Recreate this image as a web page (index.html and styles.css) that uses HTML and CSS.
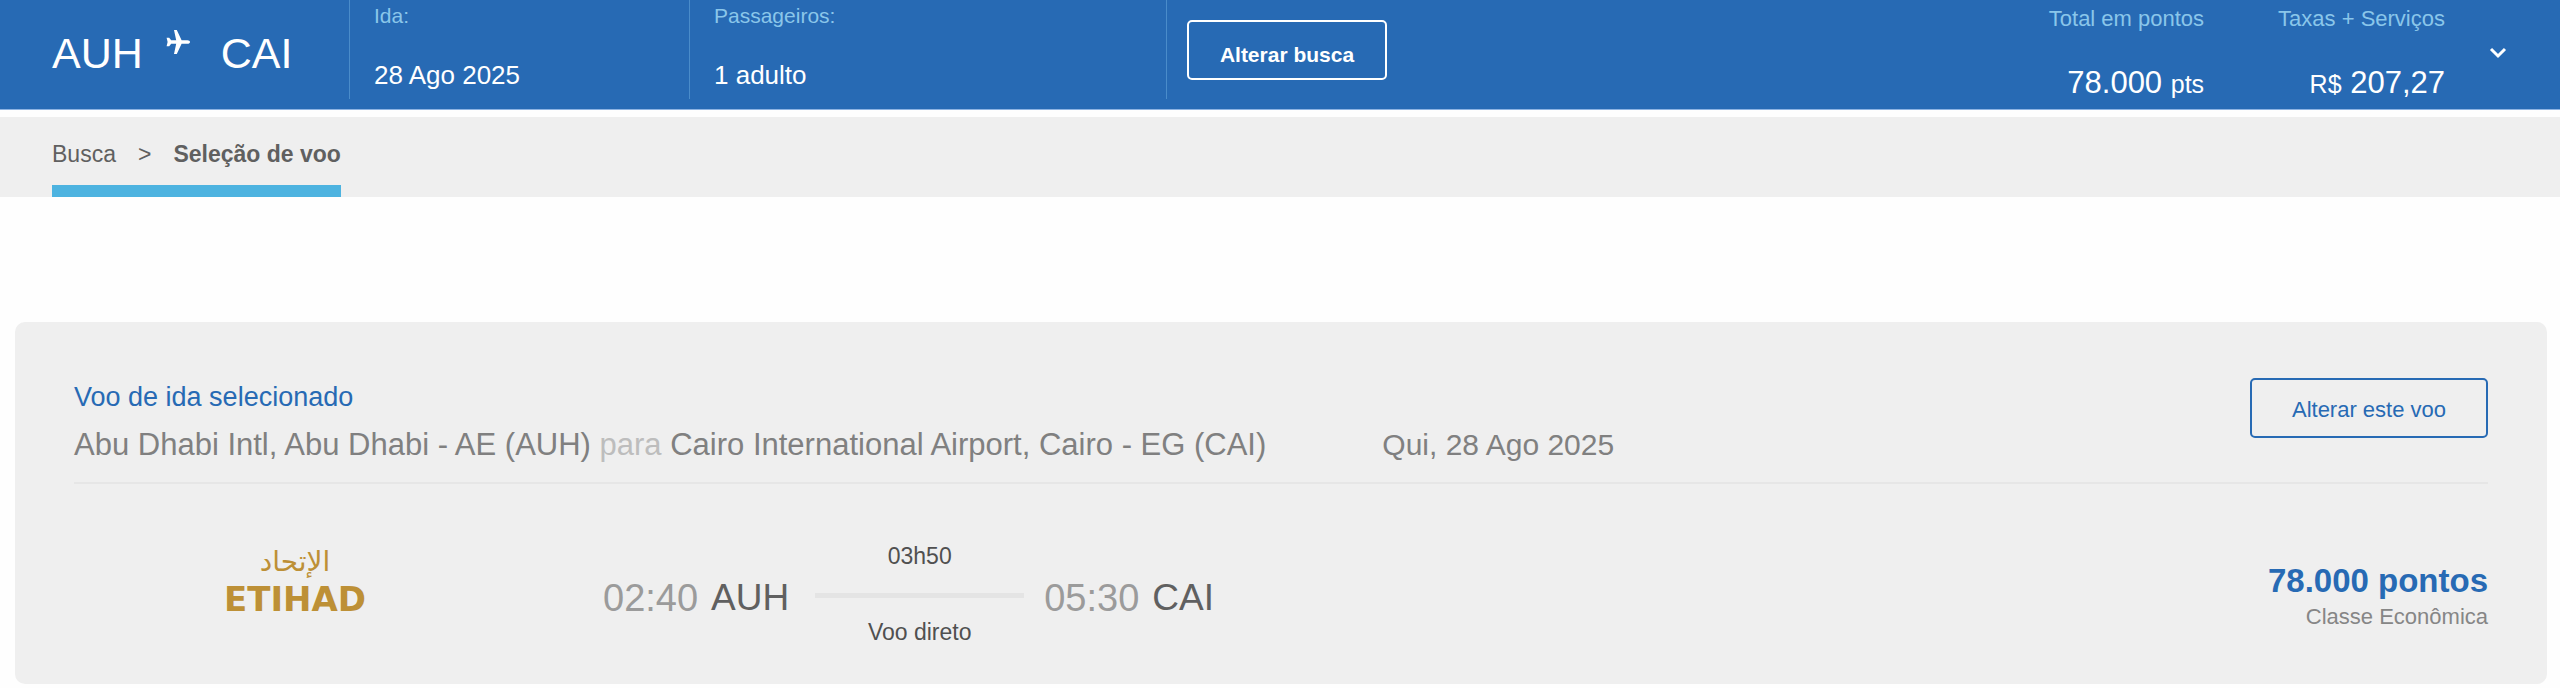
FILE: index.html
```html
<!DOCTYPE html>
<html lang="pt-BR">
<head>
    <meta charset="UTF-8">
    <meta name="viewport" content="width=device-width, initial-scale=1.0">
    <title>Seleção de voo</title>
    <link rel="stylesheet" href="styles.css">
</head>
<body>
    <header class="search-bar">
        <div class="route">
            <span>AUH</span>
            <svg class="plane" viewBox="0 0 24 24" aria-hidden="true">
                <path d="M24 12c0 1-1 1.8-2.6 1.8h-5.8L10.8 24H8l2.2-10.2H5.2l-2 2.5H.6l1-4.3-1-4.3h2.6l2 2.5h5L8 0h2.8l4.8 10.2h5.8C23 10.2 24 11 24 12z"/>
            </svg>
            <span>CAI</span>
        </div>
        <div class="info">
            <span class="info-label">Ida:</span>
            <span class="info-value">28 Ago 2025</span>
        </div>
        <div class="info info-wide">
            <span class="info-label">Passageiros:</span>
            <span class="info-value">1 adulto</span>
        </div>
        <div class="change">
            <button type="button" class="btn btn-light">Alterar busca</button>
        </div>
        <div class="totals">
            <div class="total">
                <span class="total-label">Total em pontos</span>
                <span class="total-value">78.000 <small>pts</small></span>
            </div>
            <div class="total">
                <span class="total-label">Taxas + Serviços</span>
                <span class="total-value"><small>R$</small> 207,27</span>
            </div>
            <button type="button" class="toggle" aria-label="Ver detalhes">
                <svg class="chevron" viewBox="0 0 16 10" aria-hidden="true">
                    <path d="M1 1l7 7 7-7"/>
                </svg>
            </button>
        </div>
    </header>

    <nav class="breadcrumb">
        <ol class="steps">
            <li><a href="#">Busca</a></li>
            <li>&gt;</li>
            <li class="active">Seleção de voo</li>
        </ol>
    </nav>

    <main>
        <section class="card">
            <div class="card-header">
                <div class="card-title">
                    <h2>Voo de ida selecionado</h2>
                    <div class="trip">
                        <p class="airports">Abu Dhabi Intl, Abu Dhabi - AE (AUH) <span class="to">para</span> Cairo International Airport, Cairo - EG (CAI)</p>
                        <p class="date">Qui, 28 Ago 2025</p>
                    </div>
                </div>
                <button type="button" class="btn btn-blue">Alterar este voo</button>
            </div>
            <div class="card-body">
                <div class="airline">
                    <svg class="logo" viewBox="0 0 164 84" role="img" aria-label="Etihad">
                        <text class="logo-arabic" x="82" y="30">الإتحاد</text>
                        <text class="logo-name" x="82" y="70">ETIHAD</text>
                    </svg>
                </div>
                <div class="flight">
                    <p class="stop"><span class="time">02:40</span><span>AUH</span></p>
                    <div class="leg">
                        <span>03h50</span>
                        <span class="line"></span>
                        <span>Voo direto</span>
                    </div>
                    <p class="stop"><span class="time">05:30</span><span>CAI</span></p>
                </div>
                <div class="price">
                    <strong class="points">78.000 pontos</strong>
                    <span class="cabin">Classe Econômica</span>
                </div>
            </div>
        </section>
    </main>
</body>
</html>
```
FILE: styles.css
```css
* {
    box-sizing: border-box;
}
body {
    margin: 0;
    background-color: #fefefe;
    color: #606060;
    font-family: "Liberation Sans", Arial, sans-serif;
    font-size: 23px;
}
h2, p, ol {
    margin: 0;
    padding: 0;
    font-weight: normal;
}
.btn {
    height: 60px;
    border: 2px solid;
    border-radius: 5px;
    background: none;
    font-family: inherit;
    font-size: 22px;
    white-space: nowrap;
    cursor: pointer;
}

/* barra azul da busca */
.search-bar {
    display: flex;
    height: 110px;
    background-color: #276ab4;
    border-bottom: 1px solid #8db3e2;
    color: #fff;
    white-space: nowrap;
}
.route {
    display: flex;
    width: 349px;
    padding-left: 52px;
    font-size: 43px;
    line-height: 107px;
}
.plane {
    width: 24px;
    height: 24px;
    margin: 30px 31px 0 23px;
    fill: #fff;
}
.info {
    display: flex;
    flex-direction: column;
    width: 340px;
    height: 99px;
    padding-left: 24px;
    border-left: 1px solid #4a8cca;
}
.info-wide {
    width: 477px;
}
.info-label {
    color: #8ac6ea;
    font-size: 21px;
    line-height: 32px;
}
.info-value {
    margin-top: 28px;
    font-size: 26px;
    line-height: 30px;
}
.change {
    height: 99px;
    padding: 20px 0 0 20px;
    border-left: 1px solid #4a8cca;
}
.btn-light {
    width: 200px;
    padding: 10px 0 0;
    border-color: #fff;
    color: #fff;
    font-size: 21px;
    font-weight: bold;
}
.totals {
    display: flex;
    margin-left: auto;
    padding-right: 47px;
}
.total {
    display: flex;
    flex-direction: column;
    margin-left: 74px;
    text-align: right;
}
.total-label {
    color: #8ac6ea;
    font-size: 22px;
    line-height: 38px;
}
.total-value {
    margin-top: 25px;
    font-size: 31px;
    line-height: 40px;
}
.total-value small {
    font-size: 25px;
}
.toggle {
    align-self: center;
    width: 30px;
    height: 30px;
    margin: 0 0 4px 38px;
    padding: 0;
    border: 0;
    background: none;
    cursor: pointer;
}
.chevron {
    width: 16px;
    height: 10px;
    margin: 0 auto;
    display: block;
    overflow: visible;
    fill: none;
    stroke: #fff;
    stroke-width: 3;
}

/* passos */
.breadcrumb {
    display: flex;
    margin-top: 7px;
    padding-left: 52px;
    background-color: #efefef;
}
.steps {
    display: flex;
    gap: 22px;
    padding-top: 7px;
    border-bottom: 12px solid #4db3e0;
    line-height: 61px;
    list-style: none;
}
.steps a {
    color: inherit;
    text-decoration: none;
}
.steps .active {
    font-weight: bold;
}

/* voo selecionado */
.card {
    margin: 125px 13px 4px 15px;
    padding: 56px 59px 29px;
    border-radius: 10px;
    background-color: #efefef;
}
.card-header {
    display: flex;
    justify-content: space-between;
    align-items: flex-start;
    padding-bottom: 14px;
    border-bottom: 2px solid #e6e6e6;
}
.card-title h2 {
    color: #276ab4;
    font-size: 27px;
    line-height: 38px;
}
.trip {
    display: flex;
    gap: 116px;
    margin-top: 6px;
    color: #808080;
    line-height: 46px;
}
.airports {
    font-size: 31px;
}
.date {
    font-size: 30px;
}
.to {
    color: #bdbdbd;
}
.btn-blue {
    width: 238px;
    padding: 4px 0 0;
    border-color: #276ab4;
    color: #276ab4;
}
.card-body {
    display: flex;
    align-items: flex-start;
    padding-top: 57px;
}
.airline {
    width: 529px;
    padding-left: 139px;
}
.logo {
    display: block;
    width: 164px;
    height: 84px;
    fill: #bd9036;
    text-anchor: middle;
    font-family: "DejaVu Sans", sans-serif;
}
.logo-arabic {
    font-size: 28px;
}
.logo-name {
    font-size: 34px;
    font-weight: bold;
}
.flight {
    display: flex;
}
.stop {
    display: flex;
    gap: 13px;
    font-size: 37px;
    line-height: 114px;
}
.time {
    color: #9b9b9b;
    font-size: 38px;
}
.leg {
    display: flex;
    flex-direction: column;
    width: 209px;
    margin: 0 20px 0 26px;
    color: #505050;
    line-height: 30px;
    text-align: center;
}
.line {
    height: 5px;
    margin: 22px 0 19px;
    background-color: #e4e4e4;
}
.price {
    display: flex;
    flex-direction: column;
    margin-left: auto;
    padding-top: 20px;
    text-align: right;
}
.points {
    color: #276ab4;
    font-size: 33px;
    line-height: 40px;
}
.cabin {
    color: #868686;
    font-size: 22px;
    line-height: 32px;
}
```
